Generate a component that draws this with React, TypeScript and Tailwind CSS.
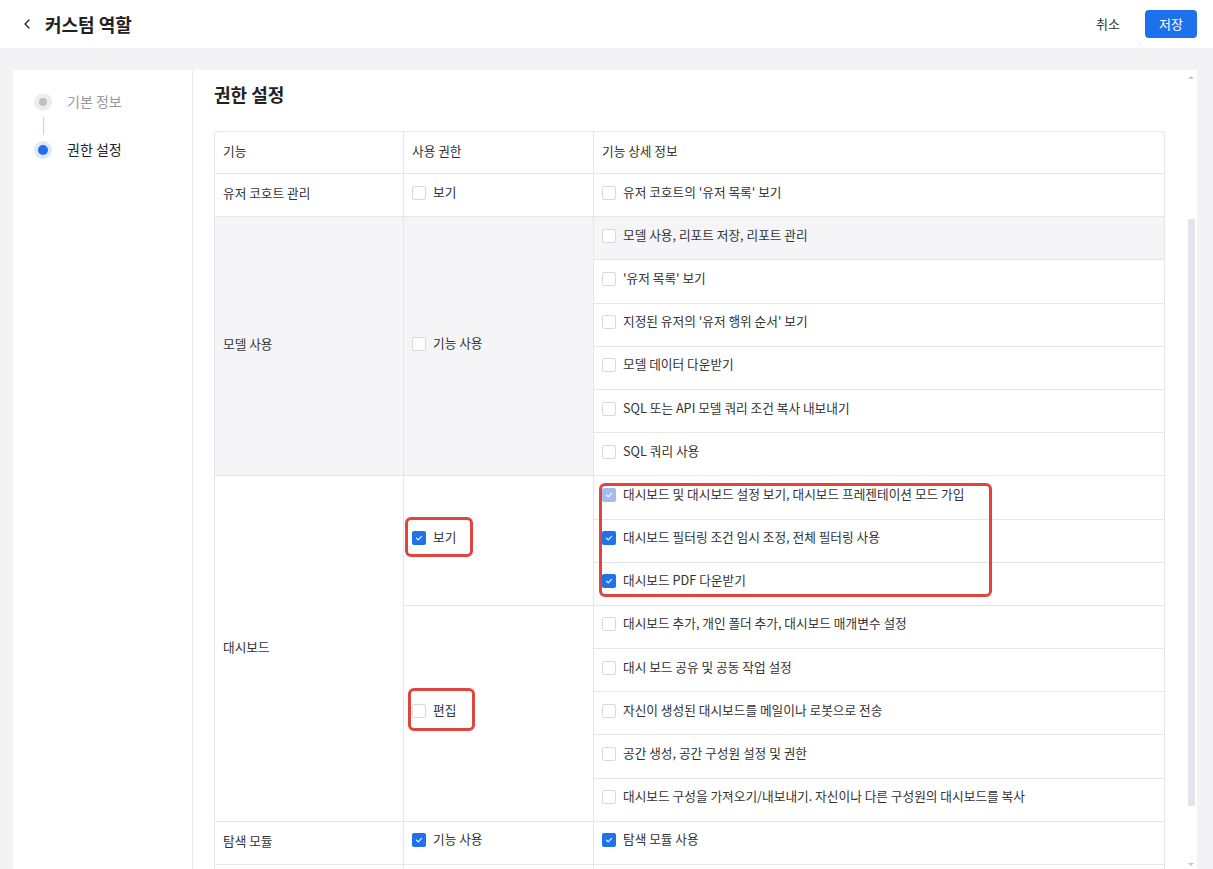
import React from "react";
import { ChevronLeft } from "lucide-react";

type CheckState = "on" | "off" | "dim";

function Check({ state = "off" }: { state?: CheckState }) {
  if (state === "off") {
    return <span className="w-[14px] h-[14px] shrink-0 rounded-[2px] border border-[#d9d9d9] bg-white" />;
  }
  return (
    <span
      className={`w-[14px] h-[14px] shrink-0 rounded-[2px] flex items-center justify-center ${
        state === "on" ? "bg-[#1f72e8]" : "bg-[#a3bdf2]"
      }`}
    >
      <svg width="10" height="10" viewBox="0 0 10 10" fill="none">
        <path d="M2.4 5.1 4.2 6.9 7.6 3.3" stroke="white" strokeWidth="1.1" strokeLinecap="round" strokeLinejoin="round" />
      </svg>
    </span>
  );
}

function Item({ label, state }: { label: string; state?: CheckState }) {
  return (
    <div className="flex items-center gap-[7px]">
      <Check state={state} />
      <span className="leading-[14px] pb-[2px]">{label}</span>
    </div>
  );
}

const cell = "flex items-center px-2 pb-[5px] border-b border-[#e6e6e6]";
const head = "flex items-center px-2 pb-[4px] border-b border-[#e6e6e6]";

export default function App() {
  return (
    <div
      className="h-[869px] flex flex-col overflow-hidden bg-[#f3f3f5] text-[#333]"
      style={{ fontFamily: '"Noto Sans CJK KR", "Noto Sans", sans-serif' }}
    >
      {/* header */}
      <div className="h-[48px] shrink-0 bg-white flex items-center justify-between pl-[19px] pr-[16px]">
        <div className="flex items-center gap-[10px]">
          <ChevronLeft size={16} strokeWidth={2} className="text-[#222]" />
          <h1 className="text-[18px] font-semibold text-[#222]">커스텀 역할</h1>
        </div>
        <div className="flex items-center gap-[25px] text-[13px]">
          <button className="text-[#333] ml-[1px]">취소</button>
          <button className="h-[28px] w-[52px] rounded-[4px] bg-[#1d72ec] text-white">저장</button>
        </div>
      </div>

      {/* card */}
      <div className="flex-1 flex mt-[22px] ml-[13px] mr-[16px] bg-white min-h-0">
        {/* steps */}
        <div className="w-[180px] shrink-0 border-r border-[#ebebeb] pl-[21px] pt-[23px]">
          <div className="flex items-center gap-[15px] h-[18px]">
            <span className="w-[18px] h-[18px] rounded-full bg-[#ededed] flex items-center justify-center">
              <span className="w-[8px] h-[8px] rounded-full bg-[#bfbfbf]" />
            </span>
            <span className="text-[14px] text-[#999] pb-[2px]">기본 정보</span>
          </div>
          <div className="w-[18px] flex justify-center py-[6px]">
            <span className="w-px h-[18px] bg-[#d0d0d0]" />
          </div>
          <div className="flex items-center gap-[15px] h-[18px]">
            <span className="w-[18px] h-[18px] rounded-full bg-[#dfe7fb] flex items-center justify-center">
              <span className="w-[10px] h-[10px] rounded-full bg-[#1f6fe8]" />
            </span>
            <span className="text-[14px] text-[#222] pb-[2px]">권한 설정</span>
          </div>
        </div>

        {/* content */}
        <div className="flex-1 flex min-w-0">
          <div className="flex-1 pl-[21px] pr-[20px] pt-[12px] min-w-0">
            <h2 className="text-[18px] font-semibold text-[#222] h-[25px] leading-[25px]">권한 설정</h2>
            <div className="relative mt-[24px] border-l border-r border-t border-[#e6e6e6] rounded-t-[4px] text-[12.7px]">
              <div className="grid grid-cols-[189px_190px_1fr] h-[42px]">
                <div className={`${head} border-r`}>기능</div>
                <div className={`${head} border-r`}>사용 권한</div>
                <div className={head}>기능 상세 정보</div>
              </div>
              <div className="grid grid-cols-[189px_190px_1fr] auto-rows-[43.2px]">
                <div className={`${cell} border-r`}>유저 코호트 관리</div>
                <div className={`${cell} border-r`}><Item label="보기" /></div>
                <div className={cell}><Item label="유저 코호트의 '유저 목록' 보기" /></div>

                <div className={`${cell} border-r row-span-6 bg-[#f5f5f7]`}>모델 사용</div>
                <div className={`${cell} border-r row-span-6 bg-[#f5f5f7]`}><Item label="기능 사용" /></div>
                <div className={`${cell} bg-[#f5f5f7]`}><Item label="모델 사용, 리포트 저장, 리포트 관리" /></div>
                <div className={cell}><Item label="'유저 목록' 보기" /></div>
                <div className={cell}><Item label="지정된 유저의 '유저 행위 순서' 보기" /></div>
                <div className={cell}><Item label="모델 데이터 다운받기" /></div>
                <div className={cell}><Item label="SQL 또는 API 모델 쿼리 조건 복사 내보내기" /></div>
                <div className={cell}><Item label="SQL 쿼리 사용" /></div>

                <div className={`${cell} border-r row-span-8`}>대시보드</div>
                <div className={`${cell} border-r row-span-3`}><Item label="보기" state="on" /></div>
                <div className={cell}><Item label="대시보드 및 대시보드 설정 보기, 대시보드 프레젠테이션 모드 가입" state="dim" /></div>
                <div className={cell}><Item label="대시보드 필터링 조건 임시 조정, 전체 필터링 사용" state="on" /></div>
                <div className={cell}><Item label="대시보드 PDF 다운받기" state="on" /></div>
                <div className={`${cell} border-r row-span-5`}><Item label="편집" /></div>
                <div className={cell}><Item label="대시보드 추가, 개인 폴더 추가, 대시보드 매개변수 설정" /></div>
                <div className={cell}><Item label="대시 보드 공유 및 공동 작업 설정" /></div>
                <div className={cell}><Item label="자신이 생성된 대시보드를 메일이나 로봇으로 전송" /></div>
                <div className={cell}><Item label="공간 생성, 공간 구성원 설정 및 권한" /></div>
                <div className={cell}><Item label="대시보드 구성을 가져오기/내보내기. 자신이나 다른 구성원의 대시보드를 복사" /></div>

                <div className={`${cell} border-r`}>탐색 모듈</div>
                <div className={`${cell} border-r`}><Item label="기능 사용" state="on" /></div>
                <div className={cell}><Item label="탐색 모듈 사용" state="on" /></div>

                <div className={`${cell} border-r`} />
                <div className={`${cell} border-r`} />
                <div className={cell} />
              </div>

              {/* highlight boxes */}
              <div className="absolute left-[190px] top-[385px] w-[68px] h-[40px] border-[3px] border-[#e0453d] rounded-[6px]" />
              <div className="absolute left-[384px] top-[351px] w-[393px] h-[114px] border-[3px] border-[#e0453d] rounded-[6px]" />
              <div className="absolute left-[193px] top-[556px] w-[67px] h-[43px] border-[3px] border-[#e0453d] rounded-[6px]" />
            </div>
          </div>

          {/* scrollbar */}
          <div className="w-[12px] shrink-0 flex flex-col items-center pt-[6px]">
            <span className="w-0 h-0 border-l-[3px] border-r-[3px] border-b-[3px] border-l-transparent border-r-transparent border-b-[#c4c4c4]" />
            <span className="w-[7px] h-[587px] mt-[140px] bg-[#e4e4e9]" />
            <span className="mt-auto mb-[3px] w-0 h-0 border-l-[3px] border-r-[3px] border-t-[3px] border-l-transparent border-r-transparent border-t-[#c4c4c4]" />
          </div>
        </div>
      </div>
    </div>
  );
}
